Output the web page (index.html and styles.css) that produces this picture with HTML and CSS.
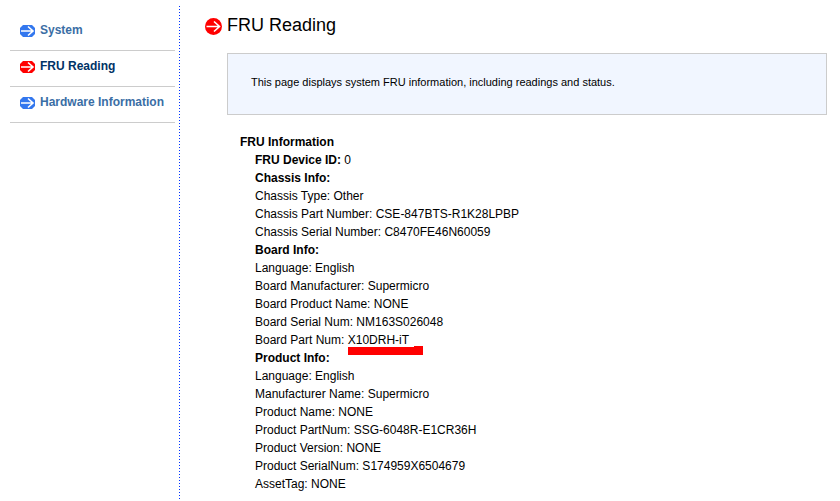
FILE: index.html
```html
<!DOCTYPE html>
<html lang="en">
<head>
  <meta charset="UTF-8" />
  <meta name="viewport" content="width=device-width, initial-scale=1.0"/>
  <title>FRU Reading</title>
  <link rel="stylesheet" href="styles.css">
</head>
<body>
  <nav class="sidebar">
    <ul>
      <li>
        <a href="#system">
          <svg class="icon" viewBox="0 0 15 12"><path class="disc" d="M3 0h9l3 3v6l-3 3H3L0 9V3z"/><path class="arrow" d="M1 6h12M8 1.5l5 4.5-5 4.5"/></svg>
          System
        </a>
      </li>
      <li>
        <a href="#fru" class="active">
          <svg class="icon" viewBox="0 0 15 12"><path class="disc" d="M3 0h9l3 3v6l-3 3H3L0 9V3z"/><path class="arrow" d="M1 6h12M8 1.5l5 4.5-5 4.5"/></svg>
          FRU Reading
        </a>
      </li>
      <li>
        <a href="#hardware">
          <svg class="icon" viewBox="0 0 15 12"><path class="disc" d="M3 0h9l3 3v6l-3 3H3L0 9V3z"/><path class="arrow" d="M1 6h12M8 1.5l5 4.5-5 4.5"/></svg>
          Hardware Information
        </a>
      </li>
    </ul>
  </nav>

  <main class="content">
    <h1>
      <svg class="title-icon" viewBox="0 0 17 17"><circle class="disc" cx="8.5" cy="8.5" r="8.5"/><path class="arrow" d="M1.5 8.5h13M9 3.5l5.5 5-5.5 5"/></svg>
      FRU Reading
    </h1>
    <p class="description">This page displays system FRU information, including readings and status.</p>

    <section class="fru">
      <h2>FRU Information</h2>
      <ul>
        <li><b>FRU Device ID:</b> 0</li>
        <li><b>Chassis Info:</b></li>
        <li>Chassis Type: Other</li>
        <li>Chassis Part Number: CSE-847BTS-R1K28LPBP</li>
        <li>Chassis Serial Number: C8470FE46N60059</li>
        <li><b>Board Info:</b></li>
        <li>Language: English</li>
        <li>Board Manufacturer: Supermicro</li>
        <li>Board Product Name: NONE</li>
        <li>Board Serial Num: NM163S026048</li>
        <li>Board Part Num: <span class="marked">X10DRH-iT<svg class="marker" viewBox="0 0 75 9"><path d="M0 1h66V0h9v9H0z"/></svg></span></li>
        <li><b>Product Info:</b></li>
        <li>Language: English</li>
        <li>Manufacturer Name: Supermicro</li>
        <li>Product Name: NONE</li>
        <li>Product PartNum: SSG-6048R-E1CR36H</li>
        <li>Product Version: NONE</li>
        <li>Product SerialNum: S174959X6504679</li>
        <li>AssetTag: NONE</li>
      </ul>
    </section>
  </main>
</body>
</html>
```
FILE: styles.css
```css
body {
  display: flex;
  margin: 0;
  padding: 6px 0 2px;
  background-color: #fff;
  color: #000;
  font-family: "Liberation Sans", Arial, sans-serif;
  font-size: 12px;
  line-height: 18px;
  text-rendering: optimizeSpeed;
}

ul {
  list-style: none;
  margin: 0;
  padding: 0;
}

/* Sidebar */
.sidebar {
  box-sizing: border-box;
  flex: 0 0 180px;
  padding: 9px 5px 0 10px;
  background: repeating-linear-gradient(#03f 0 1px, transparent 1px 3px) right top / 1px 100% no-repeat;
}

.sidebar li {
  border-bottom: 1px solid #ccc;
}

.sidebar a {
  display: flex;
  align-items: center;
  gap: 5px;
  padding: 6px 0 11px 10px;
  color: #3a6ea5;
  font-weight: bold;
  text-decoration: none;
  white-space: nowrap;
}

.sidebar a.active {
  color: #036;
}

.icon {
  width: 15px;
  height: 12px;
  margin-top: 2px;
}

.disc {
  fill: #37e;
}

.active .disc,
.title-icon .disc {
  fill: #f00;
}

.arrow {
  fill: none;
  stroke: #fff;
  stroke-width: 1.6;
}

/* Main area */
.content {
  flex: 1;
  padding: 7px 13px 6px 25px;
}

h1 {
  display: flex;
  align-items: center;
  gap: 5px;
  margin: 0;
  font-size: 18px;
  font-weight: normal;
  line-height: 24px;
}

.title-icon {
  width: 17px;
  height: 17px;
  margin-top: 3px;
}

.description {
  margin: 16px 0 18px 22px;
  padding: 19px 23px 23px;
  border: 1px solid #ccc;
  background-color: #f1f6ff;
  font-size: 11px;
}

.fru {
  padding-left: 35px;
}

.fru h2 {
  margin: 0;
  font-size: 12px;
}

.fru ul {
  padding-left: 15px;
}

.marked {
  position: relative;
}

.marker {
  position: absolute;
  top: 13px;
  left: 0;
  width: 75px;
  height: 9px;
  fill: #f00;
}
```
